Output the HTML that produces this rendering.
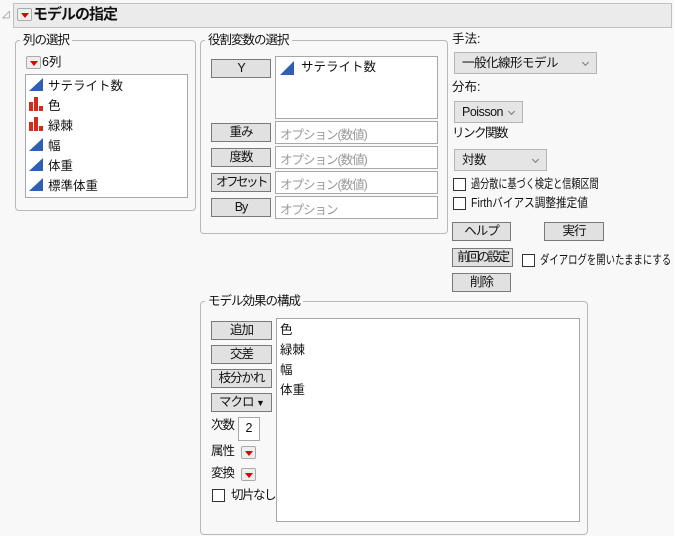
<!DOCTYPE html>
<html><head><meta charset="utf-8"><style>
*{margin:0;padding:0;box-sizing:border-box}
body{width:674px;height:536px;background:#f8f8f8;font-family:"Liberation Sans","Noto Sans CJK JP",sans-serif;font-size:12.5px;color:#111;position:relative;overflow:hidden}
.a{position:absolute;white-space:nowrap}
.panel{position:absolute;border:1px solid #b8b8b8;border-radius:4px}
.leg{position:absolute;background:#f8f8f8;padding:0 3px;top:-9px;left:4px;line-height:16px;letter-spacing:-1px}
.box{position:absolute;background:#fff;border:1px solid #a8a8a8;white-space:nowrap;overflow:hidden}
.btn{position:absolute;background:#e1e1e1;border:1px solid #7a7a7a;text-align:center;line-height:16px;white-space:nowrap;overflow:hidden;letter-spacing:-1px}
.dd{position:absolute;background:#e5e5e5;border:1px solid #b5b5b5;line-height:20px;padding-left:7px;white-space:nowrap;letter-spacing:-0.5px}
.dd:after{content:"";position:absolute;right:8px;top:7px;width:4px;height:4px;border-right:1px solid #777;border-bottom:1px solid #777;transform:rotate(45deg)}
.cb{position:absolute;width:13px;height:13px;background:#fff;border:1px solid #333}
.rb{position:absolute;width:15px;height:13px;background:#eee;border:1px solid #aaa;border-radius:2px}
.rb:after{content:"";position:absolute;left:3px;top:4px;border-left:4px solid transparent;border-right:4px solid transparent;border-top:5px solid #d00}
.ph{color:#999;letter-spacing:-1px}
.t{font-size:12.5px;transform-origin:left center}
</style></head><body>
<div class="a" style="left:2px;top:9px;font-size:10px;color:#888">◿</div>
<div class="a" style="left:13px;top:3px;width:659px;height:25px;background:#ebebeb;border:1px solid #c0c0c0"></div>
<div class="rb" style="left:17px;top:8px"></div>
<div class="a" style="left:33px;top:5px;font-size:15px;font-weight:bold;line-height:20px;letter-spacing:-1px">モデルの指定</div>

<div class="panel" style="left:15px;top:40px;width:181px;height:171px"><span class="leg">列の選択</span></div>
<div class="rb" style="left:26px;top:56px"></div>
<div class="a" style="left:42px;top:54px;line-height:16px">6列</div>
<div class="box" style="left:25px;top:74px;width:163px;height:124px"></div>
<svg class="a" style="left:28px;top:76px" width="20" height="120">
<g fill="#2f5fb3"><path d="M1 15 L15 2 L15 15Z"/><path d="M1 75 L15 62 L15 75Z"/><path d="M1 95 L15 82 L15 95Z"/><path d="M1 115 L15 102 L15 115Z"/></g>
<g fill="#d52a1a"><rect x="1" y="26" width="4" height="9"/><rect x="6" y="21" width="4" height="14"/><rect x="11" y="30" width="4" height="5"/><rect x="1" y="46" width="4" height="9"/><rect x="6" y="41" width="4" height="14"/><rect x="11" y="50" width="4" height="5"/></g></svg>
<div class="a" style="left:48px;top:76px;line-height:20px">サテライト数<br>色<br>緑棘<br>幅<br>体重<br>標準体重</div>

<div class="panel" style="left:200px;top:40px;width:248px;height:194px"><span class="leg">役割変数の選択</span></div>
<div class="btn" style="left:211px;top:59px;width:60px;height:19px">Y</div>
<div class="box" style="left:275px;top:56px;width:163px;height:63px"></div>
<svg class="a" style="left:279px;top:60px" width="18" height="16"><path d="M1 15 L15 1 L15 15Z" fill="#2f5fb3"/></svg>
<div class="a" style="left:301px;top:59px;line-height:16px">サテライト数</div>
<div class="btn" style="left:211px;top:123px;width:60px;height:19px">重み</div>
<div class="box ph" style="left:275px;top:121px;width:163px;height:23px;padding:2px 4px">オプション(数値)</div>
<div class="btn" style="left:211px;top:148px;width:60px;height:19px">度数</div>
<div class="box ph" style="left:275px;top:146px;width:163px;height:23px;padding:2px 4px">オプション(数値)</div>
<div class="btn" style="left:211px;top:173px;width:60px;height:19px;letter-spacing:-2.5px">オフセット</div>
<div class="box ph" style="left:275px;top:171px;width:163px;height:23px;padding:2px 4px">オプション(数値)</div>
<div class="btn" style="left:211px;top:198px;width:60px;height:19px">By</div>
<div class="box ph" style="left:275px;top:196px;width:163px;height:23px;padding:2px 4px">オプション</div>

<div class="a" style="left:452px;top:31px;line-height:16px">手法:</div>
<div class="dd" style="left:454px;top:52px;width:143px;height:22px">一般化線形モデル</div>
<div class="a" style="left:452px;top:79px;line-height:16px">分布:</div>
<div class="dd" style="left:454px;top:101px;width:69px;height:22px">Poisson</div>
<div class="a" style="left:452px;top:125px;line-height:16px;letter-spacing:-1.5px">リンク関数</div>
<div class="dd" style="left:454px;top:149px;width:93px;height:22px">対数</div>
<div class="cb" style="left:453px;top:178px"></div>
<div class="a t" style="left:471px;top:176px;line-height:16px;transform:scaleX(0.73)">過分散に基づく検定と信頼区間</div>
<div class="cb" style="left:453px;top:197px"></div>
<div class="a t" style="left:471px;top:195px;line-height:16px;transform:scaleX(0.85)">Firthバイアス調整推定値</div>
<div class="btn" style="left:452px;top:222px;width:59px;height:19px">ヘルプ</div>
<div class="btn" style="left:544px;top:222px;width:60px;height:19px">実行</div>
<div class="btn" style="left:452px;top:248px;width:61px;height:19px;letter-spacing:-2.4px">前回の設定</div>
<div class="cb" style="left:522px;top:254px"></div>
<div class="a t" style="left:540px;top:252px;line-height:16px;transform:scaleX(0.75)">ダイアログを開いたままにする</div>
<div class="btn" style="left:452px;top:273px;width:59px;height:19px">削除</div>

<div class="panel" style="left:200px;top:301px;width:388px;height:234px"><span class="leg">モデル効果の構成</span></div>
<div class="btn" style="left:211px;top:321px;width:61px;height:19px">追加</div>
<div class="btn" style="left:211px;top:345px;width:61px;height:19px">交差</div>
<div class="btn" style="left:211px;top:369px;width:61px;height:19px">枝分かれ</div>
<div class="btn" style="left:211px;top:393px;width:61px;height:19px">マクロ <span style="font-size:9px">▼</span></div>
<div class="a" style="left:211px;top:417px;line-height:16px;letter-spacing:-1px">次数</div>
<div class="box" style="left:238px;top:417px;width:22px;height:24px;text-align:center;line-height:20px">2</div>
<div class="a" style="left:211px;top:443px;line-height:16px;letter-spacing:-1px">属性</div>
<div class="rb" style="left:241px;top:446px"></div>
<div class="a" style="left:211px;top:465px;line-height:16px;letter-spacing:-1px">変換</div>
<div class="rb" style="left:241px;top:468px"></div>
<div class="cb" style="left:212px;top:489px"></div>
<div class="a" style="left:231px;top:487px;line-height:16px;letter-spacing:-1.5px">切片なし</div>
<div class="box" style="left:276px;top:318px;width:304px;height:204px"></div>
<div class="a" style="left:280px;top:320px;line-height:20px">色<br>緑棘<br>幅<br>体重</div>
</body></html>
